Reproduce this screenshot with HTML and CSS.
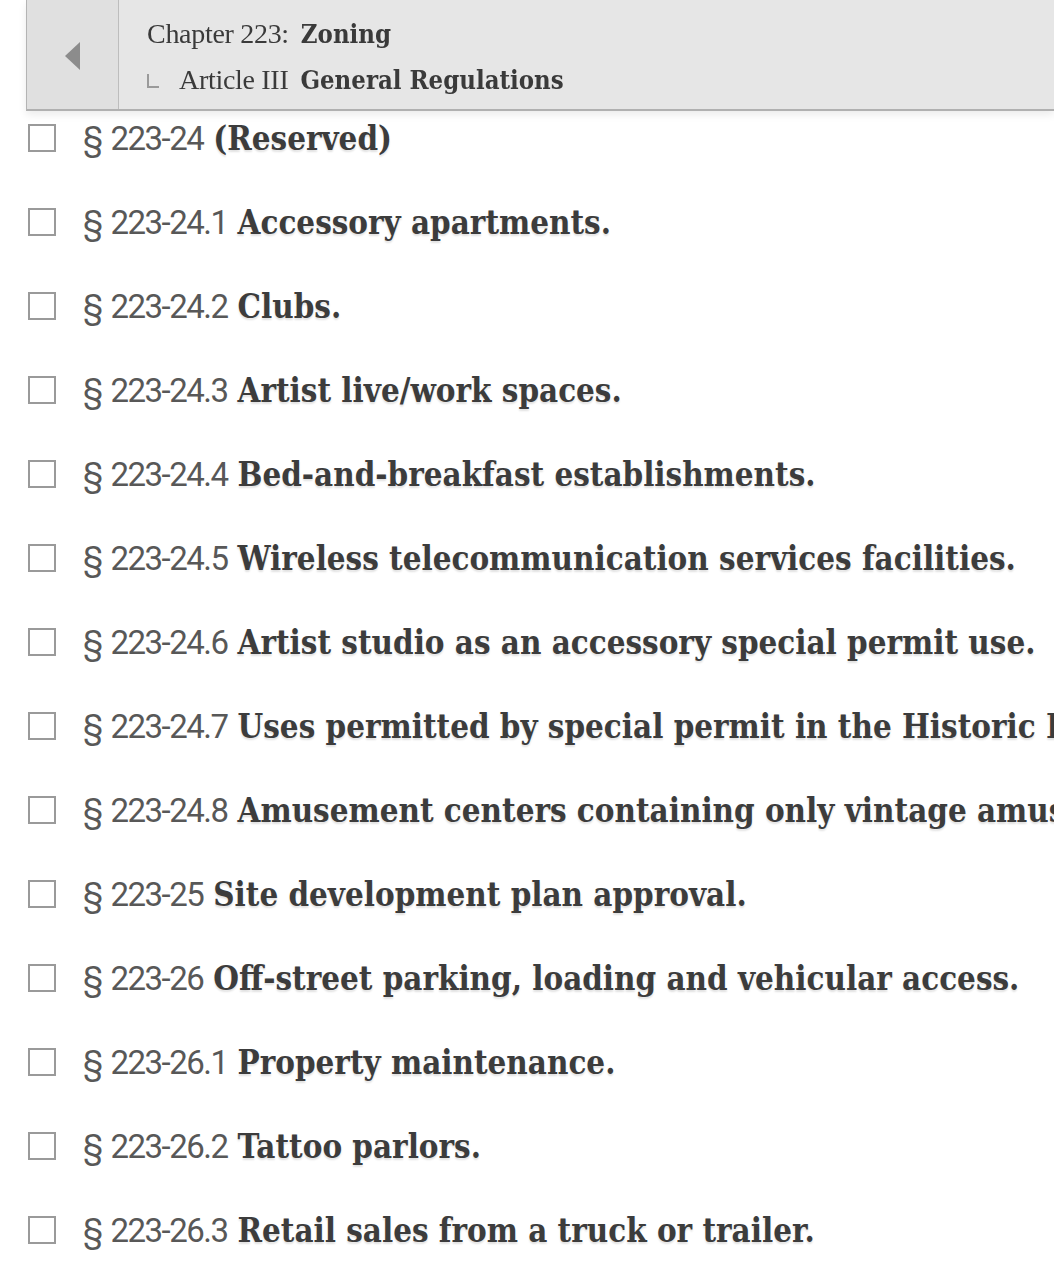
FILE: index.html
```html
<!DOCTYPE html>
<html lang="en">
<head>
    <meta charset="UTF-8">
    <meta name="viewport" content="width=device-width, initial-scale=1.0">
    <title>Chapter 223: Zoning</title>
    <link rel="stylesheet" href="styles.css">
</head>
<body>
    <div class="crumb-bar">
        <div class="crumb-back"><span class="back-arrow"></span></div>
        <div class="crumb-text">
            <div class="crumb-line">Chapter 223:<b>Zoning</b></div>
            <div class="crumb-line sub"><span class="elbow"></span>Article III<b>General Regulations</b></div>
        </div>
    </div>

    <ul class="toc">
        <li class="toc-item"><span class="check"></span><span class="num">§ 223-24</span><span class="title">(Reserved)</span></li>
        <li class="toc-item"><span class="check"></span><span class="num">§ 223-24.1</span><span class="title">Accessory apartments.</span></li>
        <li class="toc-item"><span class="check"></span><span class="num">§ 223-24.2</span><span class="title">Clubs.</span></li>
        <li class="toc-item"><span class="check"></span><span class="num">§ 223-24.3</span><span class="title">Artist live/work spaces.</span></li>
        <li class="toc-item"><span class="check"></span><span class="num">§ 223-24.4</span><span class="title">Bed-and-breakfast establishments.</span></li>
        <li class="toc-item"><span class="check"></span><span class="num">§ 223-24.5</span><span class="title">Wireless telecommunication services facilities.</span></li>
        <li class="toc-item"><span class="check"></span><span class="num">§ 223-24.6</span><span class="title">Artist studio as an accessory special permit use.</span></li>
        <li class="toc-item"><span class="check"></span><span class="num">§ 223-24.7</span><span class="title">Uses permitted by special permit in the Historic District.</span></li>
        <li class="toc-item"><span class="check"></span><span class="num">§ 223-24.8</span><span class="title">Amusement centers containing only vintage amusement devices.</span></li>
        <li class="toc-item"><span class="check"></span><span class="num">§ 223-25</span><span class="title">Site development plan approval.</span></li>
        <li class="toc-item"><span class="check"></span><span class="num">§ 223-26</span><span class="title">Off-street parking, loading and vehicular access.</span></li>
        <li class="toc-item"><span class="check"></span><span class="num">§ 223-26.1</span><span class="title">Property maintenance.</span></li>
        <li class="toc-item"><span class="check"></span><span class="num">§ 223-26.2</span><span class="title">Tattoo parlors.</span></li>
        <li class="toc-item"><span class="check"></span><span class="num">§ 223-26.3</span><span class="title">Retail sales from a truck or trailer.</span></li>
    </ul>
</body>
</html>
```

FILE: styles.css
```css
body {
    margin: 0;
    background: #fff;
    overflow: hidden;
    color: #3c3c3c;
}

/* breadcrumb bar pinned over the list */
.crumb-bar {
    position: fixed;
    top: 0;
    left: 26px;
    right: 0;
    height: 109px;
    display: flex;
    background: #e6e6e6;
    border-left: 1px solid #b4b4b4;
    border-bottom: 2px solid #b0b0b0;
    box-shadow: 0 4px 8px rgba(0,0,0,0.08);
    z-index: 2;
}
.crumb-back {
    width: 91px;
    flex-shrink: 0;
    display: flex;
    align-items: center;
    justify-content: center;
    background: #e0e0e0;
    border-right: 1px solid #bdbdbd;
}
.back-arrow {
    width: 0;
    height: 0;
    border-top: 14px solid transparent;
    border-bottom: 14px solid transparent;
    border-right: 15px solid #8c8c8c;
    margin-top: 2px;
}
.crumb-text {
    padding: 14px 0 0 28px;
    font-family: "Liberation Serif", serif;
    font-size: 28px;
    letter-spacing: -0.3px;
    color: #3a3a3a;
}
.crumb-line {
    height: 46px;
    line-height: 40px;
    white-space: nowrap;
}
.crumb-line b {
    font-family: "DejaVu Serif Condensed", "DejaVu Serif", serif;
    font-size: 25.5px;
    letter-spacing: 0;
    margin-left: 12px;
}
.elbow {
    display: inline-block;
    width: 10px;
    height: 12px;
    border-left: 2px solid #9a9a9a;
    border-bottom: 2px solid #9a9a9a;
    margin-right: 20px;
    vertical-align: 1px;
}

/* section list */
.toc {
    list-style: none;
    margin: 0;
    padding: 96px 0 0 28px;
}
.toc-item {
    height: 84px;
    display: flex;
    align-items: center;
    white-space: nowrap;
}
.check {
    width: 24px;
    height: 24px;
    border: 2px solid #9a9a9a;
    flex-shrink: 0;
    margin-right: 27px;
}
.num {
    font-family: "Liberation Sans Narrow", "Roboto", sans-serif;
    font-size: 33px;
    color: #585858;
    letter-spacing: -1.5px;
    word-spacing: 2px;
    margin-right: 10px;
}
.title {
    font-family: "DejaVu Serif Condensed", "DejaVu Serif", serif;
    font-weight: bold;
    font-size: 32.8px;
    color: #3c3c3c;
    text-shadow: 0 2px 2px rgba(0,0,0,0.12);
}
```
